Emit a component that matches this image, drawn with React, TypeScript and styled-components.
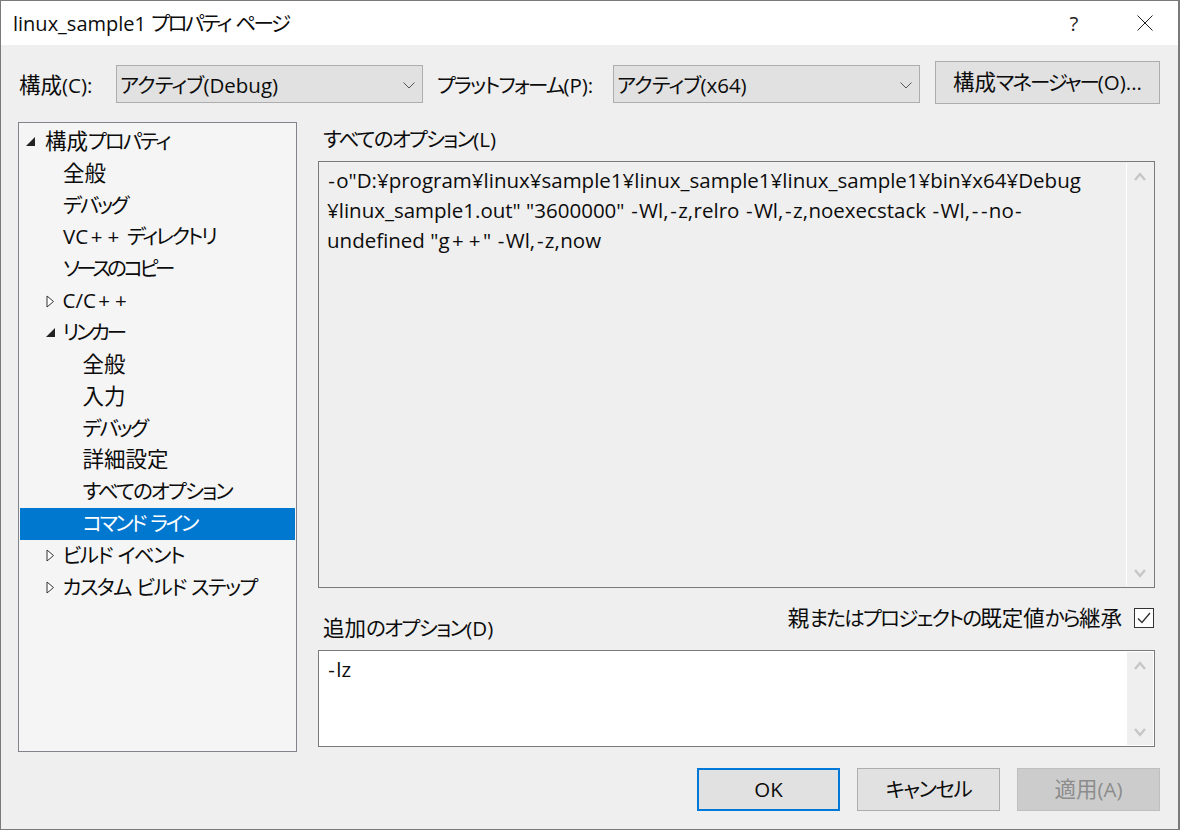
import React from "react";
import styled, { createGlobalStyle, css } from "styled-components";

const Global = createGlobalStyle`
  html, body { margin: 0; padding: 0; background: #efefef; }
  #root { width: 1180px; height: 830px; overflow: hidden; }
  * { box-sizing: border-box; }
`;

const Dialog = styled.div`
  width: 1180px;
  height: 830px;
  display: flex;
  flex-direction: column;
  border: 1px solid #7a7a7a;
  border-right-width: 2px;
  background: #efefef;
  color: #0c0c0c;
  font-family: "Open Sans", "Noto Sans CJK JP", sans-serif;
  font-size: 20.5px;
  font-feature-settings: "palt";
  line-height: 28px;
`;

const Kanji = styled.span`
  font-size: 21.5px;
`;

const Kana = styled.span<{ $ls: number }>`
  font-size: 20.5px;
  letter-spacing: ${(p) => p.$ls}px;
`;

const Punct = styled.span<{ $l: number; $r: number }>`
  padding: 0 ${(p) => p.$r}px 0 ${(p) => p.$l}px;
`;

const punctPad: Record<string, [number, number]> = {
  "-": [1.3, 1.3],
  ",": [0, 0.5],
  "+": [2.5, 2.5],
};

const T = ({ s, ls = -1.75 }: { s: string; ls?: number }) => (
  <>
    {s.split(/([\u3040-\u30ff]+|[\u4e00-\u9fff]+|[-,+])/).map((run, i) => {
      if (/^[\u3040-\u30ff]/.test(run)) return <Kana key={i} $ls={ls}>{run}</Kana>;
      if (/^[\u4e00-\u9fff]/.test(run)) return <Kanji key={i}>{run}</Kanji>;
      if (punctPad[run]) return <Punct key={i} $l={punctPad[run][0]} $r={punctPad[run][1]}>{run}</Punct>;
      return run;
    })}
  </>
);

const TitleBar = styled.header`
  height: 44px;
  flex: none;
  background: #fff;
  display: flex;
  align-items: center;
  padding-left: 12px;
`;

const Title = styled.h1`
  margin: 0;
  flex: 1;
  font-size: 20px;
  font-weight: 400;
  line-height: 28px;
`;

const HelpGlyph = styled.span`
  width: 24px;
  text-align: center;
  margin-right: 51px;
  color: #222;
`;

const CloseButton = styled.span`
  width: 16px;
  height: 16px;
  margin-right: 25px;
  display: flex;
`;

const Body = styled.main`
  flex: 1;
  display: flex;
  flex-direction: column;
  padding: 16px 18px 18px 17px;
`;

const Toolbar = styled.div`
  height: 43px;
  flex: none;
  display: flex;
  align-items: center;
`;

const FieldLabel = styled.label<{ $w: number; $pad?: number }>`
  width: ${(p) => p.$w}px;
  padding: 5px 0 0 ${(p) => p.$pad ?? 0}px;
  flex: none;
`;

const Combo = styled.div`
  width: 307px;
  height: 38px;
  margin-top: 3px;
  flex: none;
  display: flex;
  align-items: center;
  justify-content: space-between;
  padding: 2px 7px 0 3px;
  background: #e1e1e1;
  border: 1px solid #adadad;
`;

const Button = styled.button<{ $kind?: "default" | "disabled" }>`
  height: 43px;
  width: 143px;
  padding: 0 0 2px;
  font: inherit;
  font-feature-settings: inherit;
  color: #0c0c0c;
  background: #e1e1e1;
  border: 1px solid #adadad;
  ${(p) =>
    p.$kind === "default" &&
    css`
      border: 2px solid #0078d7;
    `}
  ${(p) =>
    p.$kind === "disabled" &&
    css`
      background: #cccccc;
      border-color: #bfbfbf;
      color: #8c8c8c;
    `}
`;

const ManagerButton = styled(Button)`
  width: 225px;
  margin-left: 15px;
`;

const Main = styled.div`
  flex: 1;
  min-height: 0;
  margin-top: 18px;
  display: grid;
  grid-template-columns: 279px 837px;
  column-gap: 21px;
`;

const Tree = styled.ul`
  list-style: none;
  margin: 0;
  padding: 3px 1px 0;
  height: 630px;
  background: #f5f5f5;
  border: 1px solid #82838c;
`;

const TreeRow = styled.li<{ $level: number; $selected?: boolean }>`
  height: 31.85px;
  display: flex;
  align-items: center;
  padding-bottom: 2px;
  padding-left: ${(p) => 6 + (p.$level - 1) * 19.5 - (p.$level > 2 ? 2 : 0)}px;
  ${(p) =>
    p.$selected &&
    css`
      background: #0078d0;
      color: #fff;
    `}
`;

const Arrow = styled.span<{ $w: number }>`
  width: ${(p) => p.$w}px;
  flex: none;
  display: flex;
  align-items: center;
  padding-top: 2px;
`;

const Options = styled.section`
  display: flex;
  flex-direction: column;
`;

const SectionLabel = styled.div`
  height: 39px;
  flex: none;
  padding: 3px 0 0 5px;
`;

const Box = styled.div<{ $h: number; $white?: boolean }>`
  height: ${(p) => p.$h}px;
  flex: none;
  display: flex;
  border: 1px solid #7a7a7a;
  background: ${(p) => (p.$white ? "#fff" : "#efefef")};
`;

const BoxText = styled.div`
  flex: 1;
  padding: 3px 8px;
`;

const BoxLine = styled.div`
  height: 30px;
  line-height: 30px;
  white-space: pre;
`;

const ScrollBar = styled.div`
  width: 27px;
  flex: none;
  margin: 1px 1px 1px 0;
  background: #efefef;
  border-left: 1px solid #fff;
  display: flex;
  flex-direction: column;
  justify-content: space-between;
  align-items: center;
  padding: 9px 0 8px;
`;

const InheritRow = styled.div`
  height: 62px;
  flex: none;
  display: flex;
  padding-left: 5px;
  position: relative;
`;

const AddLabel = styled.span`
  align-self: flex-end;
  margin-bottom: 8px;
`;

const InheritLabel = styled.label`
  display: flex;
  align-items: center;
  height: 20px;
  gap: 12px;
  position: absolute;
  top: 20px;
  right: 1px;
`;

const CheckBox = styled.span`
  width: 20px;
  height: 20px;
  background: #fff;
  border: 1px solid #333;
  display: flex;
  align-items: center;
  justify-content: center;
`;

const Footer = styled.footer`
  flex: none;
  margin-top: 16px;
  display: flex;
  justify-content: flex-end;
  gap: 17px;
`;

const ScrollChevron = ({ up }: { up?: boolean }) => (
  <svg width="12" height="9" viewBox="0 0 12 9" fill="none">
    <path d={up ? "M1 8l5-6 5 6" : "M1 1l5 6 5-6"} stroke="#c6c6c6" strokeWidth="2.4" />
  </svg>
);

const ComboChevron = () => (
  <svg width="12" height="7" viewBox="0 0 12 7" fill="none">
    <path d="M.5.5 6 6l5.5-5.5" stroke="#555" strokeWidth="1" />
  </svg>
);

const Open = () => (
  <svg width="9" height="9" viewBox="0 0 9 9">
    <path d="M0 9 9 0v9z" fill="#222" />
  </svg>
);

const Closed = () => (
  <svg width="9" height="13" viewBox="0 0 9 13">
    <path d="M1 1l6.5 5.5L1 12z" fill="#fff" stroke="#333" />
  </svg>
);

type Item = { t: string; l: number; a?: "open" | "closed"; s?: boolean; ls?: number };
const items: Item[] = [
  { t: "構成プロパティ", l: 1, a: "open", ls: -2 },
  { t: "全般", l: 3 },
  { t: "デバッグ", l: 3, ls: -2.25 },
  { t: "VC++ ディレクトリ", l: 3, ls: -2.35 },
  { t: "ソースのコピー", l: 3, ls: -3.45 },
  { t: "C/C++", l: 2, a: "closed" },
  { t: "リンカー", l: 2, a: "open", ls: -3.2 },
  { t: "全般", l: 4 },
  { t: "入力", l: 4 },
  { t: "デバッグ", l: 4, ls: -2.25 },
  { t: "詳細設定", l: 4 },
  { t: "すべてのオプション", l: 4, ls: -1.85 },
  { t: "コマンド ライン", l: 4, s: true, ls: -2.45 },
  { t: "ビルド イベント", l: 2, a: "closed", ls: -1.55 },
  { t: "カスタム ビルド ステップ", l: 2, a: "closed", ls: -1.55 },
];

const optionLines = [
  '-o"D:¥program¥linux¥sample1¥linux_sample1¥linux_sample1¥bin¥x64¥Debug',
  '¥linux_sample1.out" "3600000" -Wl,-z,relro -Wl,-z,noexecstack -Wl,--no-',
  'undefined "g++" -Wl,-z,now',
];

const TreeItem = ({ t, l, a, s, ls }: Item) => (
  <TreeRow $level={l} $selected={s}>
    {a && <Arrow $w={l === 1 ? 19 : 17}>{a === "open" ? <Open /> : <Closed />}</Arrow>}
    <span>
      <T s={t} ls={ls} />
    </span>
  </TreeRow>
);

const Scroll = () => (
  <ScrollBar>
    <ScrollChevron up />
    <ScrollChevron />
  </ScrollBar>
);

export default function App() {
  return (
    <Dialog>
      <Global />
      <TitleBar>
        <Title>
          <T s="linux_sample1 プロパティ ページ" ls={-2.5} />
        </Title>
        <HelpGlyph>?</HelpGlyph>
        <CloseButton>
          <svg width="16" height="16" viewBox="0 0 16 16">
            <path d="M.5.5l15 15M15.5.5l-15 15" stroke="#222" strokeWidth="1" fill="none" />
          </svg>
        </CloseButton>
      </TitleBar>
      <Body>
        <Toolbar>
          <FieldLabel $w={98} $pad={1}>
            <T s="構成(C):" />
          </FieldLabel>
          <Combo>
            <span>
              <T s="アクティブ(Debug)" ls={-0.85} />
            </span>
            <ComboChevron />
          </Combo>
          <FieldLabel $w={190} $pad={14}>
            <T s="プラットフォーム(P):" ls={-1.75} />
          </FieldLabel>
          <Combo>
            <span>
              <T s="アクティブ(x64)" ls={-0.85} />
            </span>
            <ComboChevron />
          </Combo>
          <ManagerButton>
            <T s="構成マネージャー(O)..." ls={-2} />
          </ManagerButton>
        </Toolbar>
        <Main>
          <Tree>
            {items.map((it, i) => (
              <TreeItem key={i} {...it} />
            ))}
          </Tree>
          <Options>
            <SectionLabel>
              <T s="すべてのオプション(L)" />
            </SectionLabel>
            <Box $h={427}>
              <BoxText>
                {optionLines.map((line) => (
                  <BoxLine key={line}>
                    <T s={line} />
                  </BoxLine>
                ))}
              </BoxText>
              <Scroll />
            </Box>
            <InheritRow>
              <AddLabel>
                <T s="追加のオプション(D)" ls={-1.6} />
              </AddLabel>
              <InheritLabel>
                <span>
                  <T s="親またはプロジェクトの既定値から継承" ls={-1.75} />
                </span>
                <CheckBox>
                  <svg width="14" height="12" viewBox="0 0 14 12" fill="none">
                    <path d="M1 6.5 5 10.5 13 1" stroke="#333" strokeWidth="1.4" />
                  </svg>
                </CheckBox>
              </InheritLabel>
            </InheritRow>
            <Box $h={97} $white>
              <BoxText>
                <BoxLine>
                  <T s="-lz" />
                </BoxLine>
              </BoxText>
              <Scroll />
            </Box>
          </Options>
        </Main>
        <Footer>
          <Button $kind="default">OK</Button>
          <Button>
            <T s="キャンセル" ls={-1.45} />
          </Button>
          <Button $kind="disabled">
            <T s="適用(A)" />
          </Button>
        </Footer>
      </Body>
    </Dialog>
  );
}
